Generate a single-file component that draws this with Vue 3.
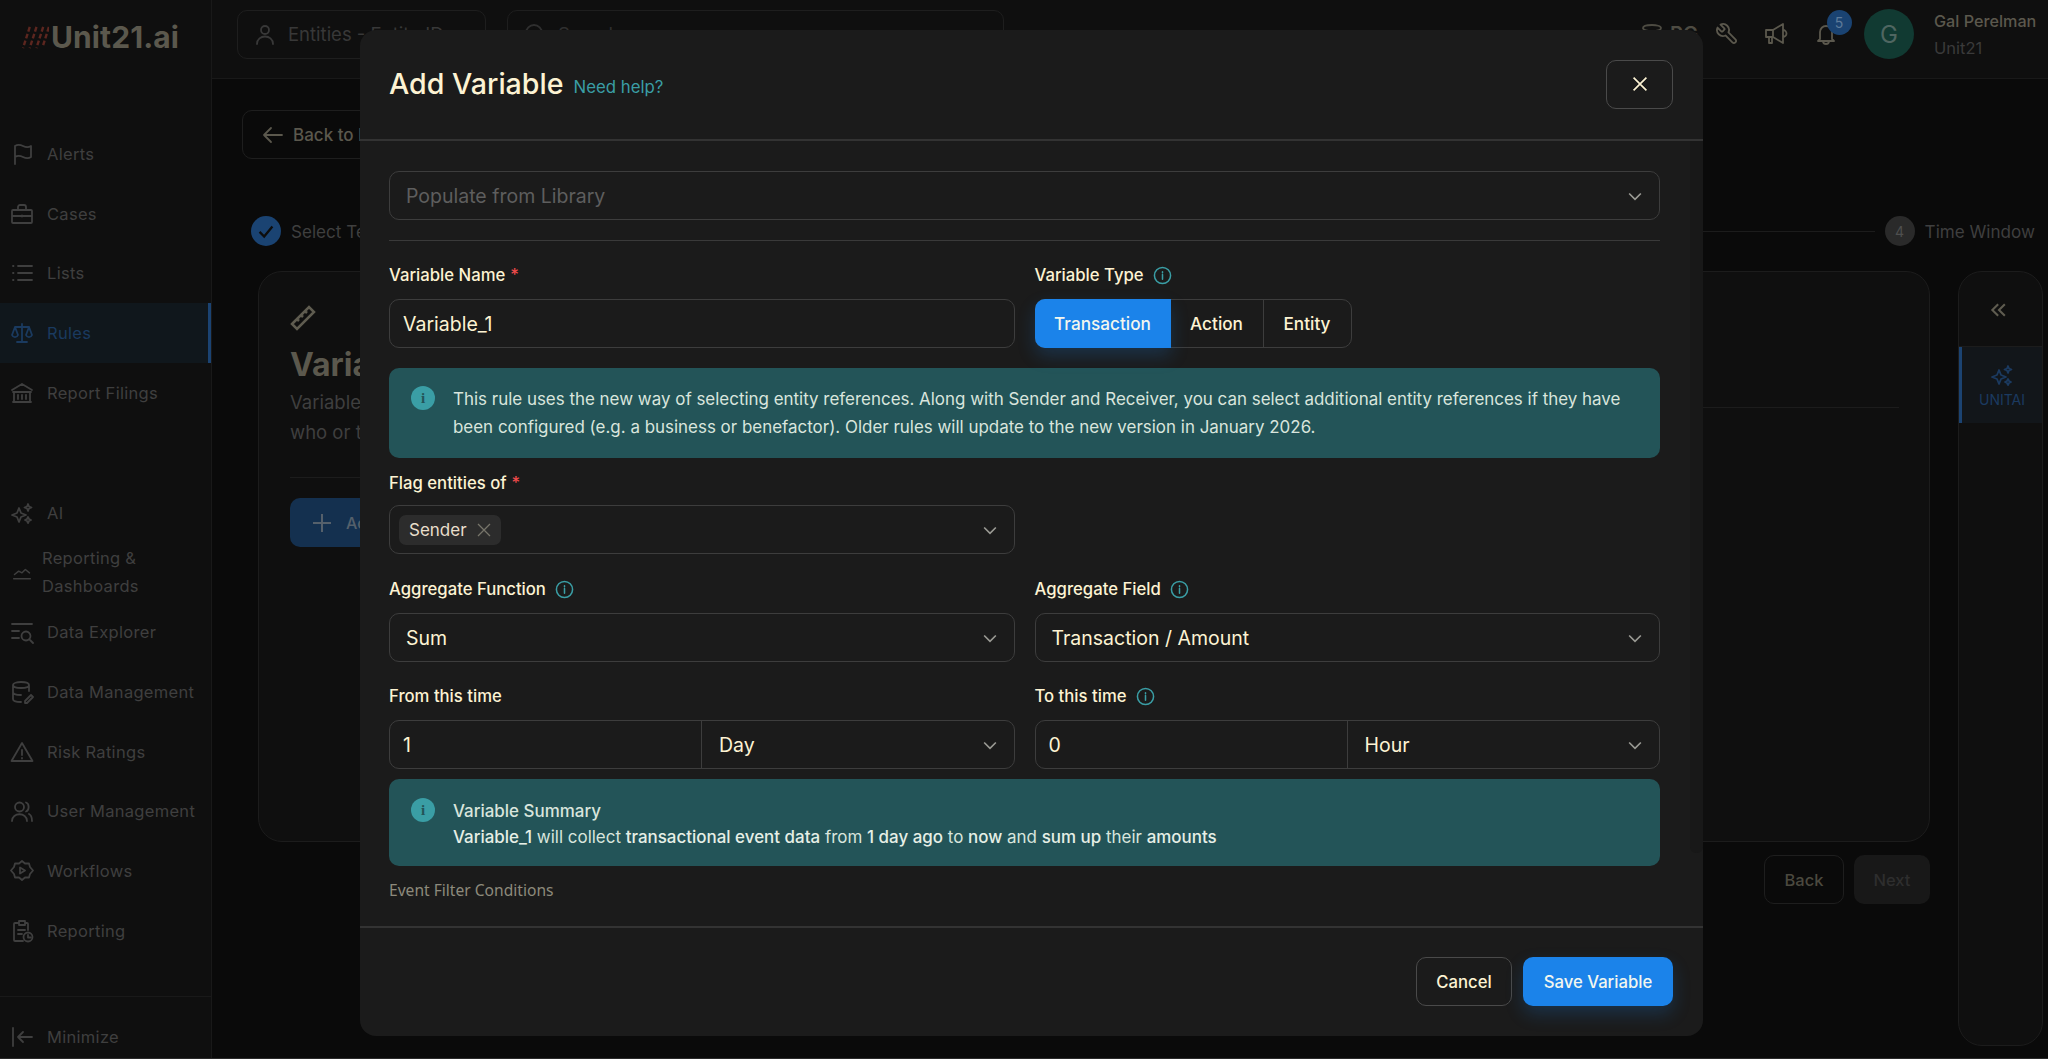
<script setup>
const navTop = [
  { t: 'Alerts', d: 'M5 22V4c3-2 6-1 8 0s5 2 8 0v11c-3 2-6 1-8 0s-5-2-8 0' },
  { t: 'Cases', d: 'M3 8h18a1 1 0 0 1 1 1v11a1 1 0 0 1-1 1H3a1 1 0 0 1-1-1V9a1 1 0 0 1 1-1zM8 8V5a2 2 0 0 1 2-2h4a2 2 0 0 1 2 2v3M2 14h20M12 13.5v1' },
  { t: 'Lists', d: 'M8 5h14M8 12h14M8 19h14M3 5h.5M3 12h.5M3 19h.5' },
  { t: 'Rules', d: 'M12 3v18M7 21h10M5 6h14M5 6l-3 8a3.2 3.2 0 0 0 6 0zM19 6l-3 8a3.2 3.2 0 0 0 6 0z', active: true },
  { t: 'Report Filings', d: 'M2 9l10-6 10 6M3 11h18M4 21V11M20 21V11M3 21h18M8 14v4M12 14v4M16 14v4' }
]
const sparkle = 'M9 7l2 5 5 2-5 2-2 5-2-5-5-2 5-2zM18 3l1 2.500 2.500 1-2.500 1-1 2.500-1-2.500-2.500-1 2.500-1zM18 16l1 2 2 1-2 1-1 2-1-2-2-1 2-1z'
const navBottom = [
  { t: 'AI', d: sparkle },
  { t: 'Reporting & Dashboards', d: 'M2 20h20M3 15l5-4 4 2 4-4 5 4', wide: true },
  { t: 'Data Explorer', d: 'M2 4h20M2 11h7M2 18h7M16 16m-4.500 0a4.500 4.500 0 1 0 9 0a4.500 4.500 0 1 0-9 0M20 20l3 3' },
  { t: 'Data Management', d: 'M3 5c0-4 16-4 16 0s-16 4-16 0zM3 5v14c0 2 4 3 8 3M19 5v6M3 12c0 2 4 3 8 3M15 21l6-6 2 2-6 6h-2z' },
  { t: 'Risk Ratings', d: 'M12 3L1.500 21h21zM12 10v5M12 18v.5' },
  { t: 'User Management', d: 'M9.500 8m-4.500 0a4.500 4.500 0 1 0 9 0a4.500 4.500 0 1 0-9 0M2 22c0-9 15-9 15 0M16 3.500c3.500 1 3.500 8 0 9M19 15c2 1 3 4 3 7' },
  { t: 'Workflows', d: 'M12 2l3 2.500h4l1 3.500 3 3.500-3 3.500-1 3.500h-4L12 21l-3-2.500H5l-1-3.500-3-3.500L4 8l1-3.500h4zM10 8.500v6l5-3z' },
  { t: 'Reporting', d: 'M9 4H5a1 1 0 0 0-1 1v16a1 1 0 0 0 1 1h8M15 4h2a1 1 0 0 1 1 1v6M9 2h6v4H9zM8 11h7M8 15h4M18 18m-4.500 0a4.500 4.500 0 1 0 9 0a4.500 4.500 0 1 0-9 0M18 16v2.500h2.500' }
]
const aggregate = [
  { label: 'Aggregate Function', value: 'Sum' },
  { label: 'Aggregate Field', value: 'Transaction / Amount' }
]
const times = [
  { label: 'From this time', info: false, num: '1', unit: 'Day' },
  { label: 'To this time', info: true, num: '0', unit: 'Hour' }
]
</script>

<template>
  <div class="app">
    <aside class="side">
      <div class="logo">
        <svg class="slashes" viewBox="0 0 28 24" width="27" height="23">
          <path d="M8 1L1 23M15 1L8 23M22 1L15 23M28 1L22 20" stroke="#5c261f" stroke-width="2.500" stroke-dasharray="5 2.500" fill="none" />
        </svg>
        <span>Unit21.ai</span>
      </div>
      <nav class="nav">
        <div v-for="n in navTop" :key="n.t" class="item" :class="{ active: n.active }">
          <svg class="ico" viewBox="0 0 24 24"><path :d="n.d" /></svg>
          <span>{{ n.t }}</span>
        </div>
      </nav>
      <nav class="nav second">
        <div v-for="n in navBottom" :key="n.t" class="item" :class="{ wide: n.wide }">
          <svg class="ico" viewBox="0 0 24 24"><path :d="n.d" /></svg>
          <span>{{ n.t }}</span>
        </div>
      </nav>
      <div class="minimize">
        <svg class="ico" viewBox="0 0 24 24"><path d="M3 3v18M22 12H8M13 7l-5 5 5 5" /></svg>
        <span>Minimize</span>
      </div>
    </aside>

    <main class="main">
      <header class="top">
        <div class="search one">
          <svg class="ico" viewBox="0 0 24 24"><path d="M12 8m-4 0a4 4 0 1 0 8 0a4 4 0 1 0-8 0M4 22c0-10 16-10 16 0" /></svg>
          <span>Entities - Entity ID</span>
        </div>
        <div class="search two">
          <svg class="ico" viewBox="0 0 24 24"><path d="M11 11m-8 0a8 8 0 1 0 16 0a8 8 0 1 0-16 0M17 17l5 5" /></svg>
          <span>Search</span>
        </div>
        <div class="tools">
          <svg class="ico first" viewBox="0 0 24 24"><path d="M3 6c0-4 18-4 18 0s-18 4-18 0z" /></svg>
          <span class="org">PG</span>
          <svg class="ico tool wrench" viewBox="0 0 24 24"><path d="M14.700 6.300a1 1 0 0 0 0 1.400l1.600 1.600a1 1 0 0 0 1.400 0l3.770-3.770a6 6 0 0 1-7.940 7.940l-6.910 6.910a2.120 2.120 0 0 1-3-3l6.910-6.910a6 6 0 0 1 7.940-7.940z" /></svg>
          <svg class="ico tool" viewBox="0 0 24 24"><path d="M2 8h7v7H2zM9 8l10-6v19l-10-6M19 8a3.500 3.500 0 0 1 0 7M5 15v6h3v-6" /></svg>
          <div class="bell">
            <svg class="ico" viewBox="0 0 24 24"><path d="M6 17V10a6 6 0 0 1 12 0v7l2 2H4zM9 19a3 3 0 0 0 6 0" /></svg>
            <span class="badge">5</span>
          </div>
          <div class="avatar">G</div>
          <div class="who">
            <div class="name">Gal Perelman</div>
            <div class="org2">Unit21</div>
          </div>
        </div>
      </header>

      <div class="content">
        <button class="back">
          <svg class="ico" viewBox="0 0 24 24"><path d="M21 12H3M10 5l-7 7 7 7" /></svg>
          <span>Back to List</span>
        </button>
        <div class="stepper">
          <span class="dot done">
            <svg viewBox="0 0 24 24" width="22" height="22"><path d="M5 13l5 5 9-11" fill="none" stroke="#0d0d0d" stroke-width="2.500" /></svg>
          </span>
          <span class="step-t">Select Template</span>
          <span class="line"></span>
          <span class="dot">4</span>
          <span class="step-t">Time Window</span>
        </div>
        <div class="body-row">
          <div class="col">
            <section class="card">
              <div class="card-left">
                <svg class="ruler" viewBox="0 0 26 26" width="26" height="26"><path d="M2 19L19 2l5 5L7 24zM7 14l2 2M11 10l2 2M15 6l2 2" fill="none" stroke="#5f5c50" stroke-width="2.500" /></svg>
                <h2>Variables</h2>
                <p>Variables let you define the values that a rule evaluates,<br />who or the what they are collected from</p>
                <div class="rule"></div>
                <button class="add">
                  <svg viewBox="0 0 24 24" width="24" height="24"><path d="M12 3v18M3 12h18" stroke="#55606b" stroke-width="2" fill="none" /></svg>
                  <span>Add Variable</span>
                </button>
              </div>
              <div class="card-right"><div class="rule"></div></div>
            </section>
            <div class="actions">
              <button class="ghost">Back</button>
              <button class="off">Next</button>
            </div>
          </div>
          <aside class="rail">
            <div class="chev">
              <svg viewBox="0 0 24 24" width="20" height="20"><path d="M11 5l-7 7 7 7M19 5l-7 7 7 7" fill="none" stroke="#5f5c50" stroke-width="2.500" /></svg>
            </div>
            <div class="tab">
              <svg class="ico" viewBox="0 0 24 24"><path :d="sparkle" /></svg>
              <span>UNITAI</span>
            </div>
          </aside>
        </div>
      </div>
    </main>

    <div class="bottom-line"></div>

    <div class="modal">
      <div class="m-head">
        <h1>Add Variable</h1>
        <a class="help">Need help?</a>
        <button class="close">
          <svg viewBox="0 0 24 24" width="22" height="22"><path d="M5 5l14 14M19 5L5 19" stroke="#fdf3d3" stroke-width="1.800" fill="none" /></svg>
        </button>
      </div>
      <div class="m-body">
        <div class="scroll"></div>
        <div class="box select">
          <span class="ph">Populate from Library</span>
          <svg class="caret" viewBox="0 0 24 24"><path d="M5 9l7 7 7-7" /></svg>
        </div>
        <div class="sep"></div>

        <div class="row">
          <div class="field">
            <label>Variable Name <b>*</b></label>
            <div class="box"><span class="val">Variable_1</span></div>
          </div>
          <div class="field">
            <label>Variable Type
              <svg class="info" viewBox="0 0 20 20"><circle cx="10" cy="10" r="8.500" /><path d="M10 9v5M10 6v1" /></svg>
            </label>
            <div class="seg">
              <span class="on">Transaction</span>
              <span class="s2">Action</span>
              <span class="s3">Entity</span>
            </div>
          </div>
        </div>

        <div class="note n1">
          <span class="circ">i</span>
          <div>This rule uses the new way of selecting entity references. Along with Sender and Receiver, you can select additional entity references if they have<br />been configured (e.g. a business or benefactor). Older rules will update to the new version in January 2026.</div>
        </div>

        <div class="row r2">
          <div class="field flag">
            <label>Flag entities of <b>*</b></label>
            <div class="box select chipbox">
              <span class="chip">Sender
                <svg viewBox="0 0 16 16" width="16" height="16"><path d="M2 2l12 12M14 2L2 14" stroke="#77756a" stroke-width="1.300" fill="none" /></svg>
              </span>
              <svg class="caret" viewBox="0 0 24 24"><path d="M5 9l7 7 7-7" /></svg>
            </div>
          </div>
        </div>

        <div class="row r3">
          <div v-for="a in aggregate" :key="a.label" class="field">
            <label>{{ a.label }}
              <svg class="info" viewBox="0 0 20 20"><circle cx="10" cy="10" r="8.500" /><path d="M10 9v5M10 6v1" /></svg>
            </label>
            <div class="box select">
              <span class="val pad">{{ a.value }}</span>
              <svg class="caret" viewBox="0 0 24 24"><path d="M5 9l7 7 7-7" /></svg>
            </div>
          </div>
        </div>

        <div class="row r4">
          <div v-for="t in times" :key="t.label" class="field">
            <label>{{ t.label }}
              <svg v-if="t.info" class="info" viewBox="0 0 20 20"><circle cx="10" cy="10" r="8.500" /><path d="M10 9v5M10 6v1" /></svg>
            </label>
            <div class="box split">
              <span class="val num">{{ t.num }}</span>
              <div class="unit">
                <span class="val">{{ t.unit }}</span>
                <svg class="caret" viewBox="0 0 24 24"><path d="M5 9l7 7 7-7" /></svg>
              </div>
            </div>
          </div>
        </div>

        <div class="note n2">
          <span class="circ">i</span>
          <div>
            <div class="sum-t">Variable Summary</div>
            <div><strong>Variable_1</strong> will collect <strong>transactional event data</strong> from <strong>1 day ago</strong> to <strong>now</strong> and <strong>sum up</strong> their <strong>amounts</strong></div>
          </div>
        </div>

        <div class="event">Event Filter Conditions</div>
      </div>
      <div class="m-foot">
        <button class="cancel">Cancel</button>
        <button class="save">Save Variable</button>
      </div>
    </div>
  </div>
</template>

<style>
html, body { margin: 0; background: #0a0a0a; overflow: hidden; }
</style>

<style scoped>
.app { width: 2048px; height: 1059px; display: flex; position: relative; overflow: hidden; background: #0a0a0a; font-family: Inter, "Noto Sans", sans-serif; color: #3f3f3f; }
.ico { width: 24px; height: 24px; fill: none; stroke: currentColor; stroke-width: 1.800; stroke-linecap: round; stroke-linejoin: round; flex: none; }

.side { width: 211px; height: 1059px; flex: none; display: flex; flex-direction: column; background: #0f0f0f; border-right: 1px solid #191919; box-sizing: content-box; }
.logo { height: 124px; box-sizing: border-box; padding: 22px 0 0 22px; display: flex; align-items: flex-start; gap: 2px; font-size: 30px; font-weight: 700; color: #5b584d; line-height: 30px; letter-spacing: .1px; }
.slashes { margin-top: 4px; }
.nav { display: flex; flex-direction: column; }
.second { margin-top: 60px; }
.item { height: 59.750px; display: flex; align-items: center; gap: 13px; padding-left: 10px; font-size: 16.500px; color: #3f3f3f; box-sizing: border-box; letter-spacing: .3px; }
.item.active { background: #10171c; color: #1a3a5f; border-right: 3px solid #1b4372; }
.item.wide { line-height: 28px; gap: 10px; padding-right: 30px; padding-left: 12px; }
.item.wide .ico { width: 20px; height: 20px; }
.minimize { margin-top: auto; height: 63px; box-sizing: border-box; border-top: 1px solid #191919; display: flex; align-items: center; gap: 13px; padding: 17px 0 0 10px; font-size: 16.500px; letter-spacing: .3px; }

.main { flex: 1; min-width: 0; display: flex; flex-direction: column; }
.top { height: 79px; box-sizing: border-box; border-bottom: 1px solid #191919; background: #0f0f0f; display: flex; align-items: center; padding: 0 0 10px 25px; }
.search { height: 49px; box-sizing: border-box; border: 1px solid #1e1e1e; border-radius: 10px; display: flex; align-items: center; gap: 11px; padding-left: 15px; font-size: 18.500px; color: #2f2f2f; white-space: nowrap; overflow: hidden; }
.one { width: 249px; margin-right: 21px; color: #383838; }
.two { width: 497px; }
.tools { flex: 1; display: flex; align-items: center; color: #5b584d; position: relative; }
.tool { width: 24px; height: 24px; }
.wrench { transform: scaleX(-1); }
.first { margin-left: 636px; color: #4d4b42; }
.org { margin-left: 6px; font-size: 20px; font-weight: 600; color: #4d4b42; width: 45px; }
.tool + .tool { margin-left: 25px; }
.bell { position: relative; margin-left: 26px; display: flex; }
.badge { position: absolute; left: 12.500px; top: -12.500px; width: 25px; height: 25px; border-radius: 50%; background: #1a4372; color: #5d7a99; font-size: 14px; display: flex; align-items: center; justify-content: center; }
.avatar { width: 50px; height: 50px; margin-left: 26px; border-radius: 50%; background: #113a32; color: #4f6661; font-size: 24px; display: flex; align-items: center; justify-content: center; }
.who { margin-left: 20px; white-space: nowrap; }
.name { font-size: 16.200px; font-weight: 500; color: #5b584d; line-height: 20px; margin-bottom: 7px; }
.org2 { font-size: 16.500px; color: #3a3a3a; line-height: 20px; }

.content { flex: 1; display: flex; flex-direction: column; padding: 31px 0 0 30px; }
.back { width: 230px; height: 49px; box-sizing: border-box; background: transparent; border: 1px solid #1e1e1e; border-radius: 10px; display: flex; align-items: center; gap: 8px; padding: 0 0 0 18px; font: 500 17px Inter, sans-serif; color: #5b584d; }
.stepper { margin: 57px 0 0 9px; display: flex; align-items: center; height: 30px; padding-right: 13px; font-size: 17.100px; }
.dot { width: 30px; height: 30px; border-radius: 50%; background: #2a2a2a; color: #4f4f4f; display: flex; align-items: center; justify-content: center; flex: none; font-size: 14px; }
.done { background: #1a4372; }
.step-t { margin-left: 10px; color: #3f3f3f; white-space: nowrap; }
.line { flex: 1; height: 1px; background: #1c1c1c; margin: 0 10px 0 20px; }
.body-row { margin: 25px 5px 0 16px; display: flex; gap: 28px; }
.col { flex: 1; }
.card { height: 571px; box-sizing: border-box; border: 1px solid #1c1c1c; border-radius: 24px; background: #0f0f0f; padding: 33px 30px 0 31px; display: flex; gap: 40px; }
.card-left { width: 700px; flex: none; }
.card-right { flex: 1; padding-top: 102px; }
.ruler { display: block; }
.card h2 { margin: 14px 0 0; font-size: 32px; font-weight: 700; color: #5b584d; line-height: 40px; }
.card p { margin: 2px 0 0; font-size: 18.500px; line-height: 30px; color: #3f3f3f; white-space: nowrap; }
.rule { height: 1px; background: #1c1c1c; margin-top: 30px; }
.card-right .rule { margin-top: 0; }
.add { margin-top: 20px; height: 49px; width: 200px; border: 0; border-radius: 10px; background: #14304f; display: flex; align-items: center; gap: 12px; padding: 0 0 0 20px; font: 500 16px Inter, sans-serif; color: #55606b; }
.actions { margin-top: 13px; display: flex; justify-content: flex-end; gap: 10px; }
.actions button { height: 49px; border-radius: 10px; font: 500 16.500px Inter, sans-serif; box-sizing: border-box; }
.ghost { width: 80px; background: transparent; border: 1px solid #1e1e1e; color: #4b493f; }
.off { width: 76px; background: #181818; border: 0; color: #2e2e2e; }
.rail { width: 85px; height: 775px; box-sizing: border-box; border: 1px solid #1c1c1c; border-radius: 24px; background: #0f0f0f; flex: none; }
.chev { height: 75px; border-bottom: 1px solid #1c1c1c; display: flex; align-items: center; justify-content: center; padding-right: 4px; padding-top: 2px; box-sizing: border-box; }
.tab { height: 76px; background: #12161a; border-left: 3px solid #1b4372; color: #1b3a60; display: flex; flex-direction: column; align-items: center; justify-content: center; gap: 4px; font-size: 14px; box-sizing: border-box; }
.bottom-line { position: absolute; left: 0; right: 0; bottom: 0; height: 1px; background: #2a2a2a; }

.modal { position: absolute; left: 360px; top: 30px; width: 1343px; height: 1006px; background: #1b1b1b; border-radius: 16px; display: flex; flex-direction: column; color: #fdf3d3; overflow: hidden; }
.m-head { height: 111px; flex: none; box-sizing: border-box; border-bottom: 2px solid #333; display: flex; align-items: center; padding: 0 30px 1px 29px; }
.m-head h1 { margin: 0; font-size: 28.600px; font-weight: 500; line-height: 40px; color: #fdf3d3; }
.help { margin-left: 10px; font-size: 16.800px; color: #3a9ea5; padding-top: 5px; }
.close { margin-left: auto; width: 67px; height: 49px; background: transparent; border: 1px solid #4a4a4a; border-radius: 10px; display: flex; align-items: center; justify-content: center; padding: 0; }
.m-body { flex: 1; min-height: 0; position: relative; padding: 30px 43px 0 29px; }
.scroll { position: absolute; right: 0; top: 0; width: 13px; height: 712px; background: #181818; border-radius: 0 0 6px 6px; }
.box { height: 49px; box-sizing: border-box; border: 1px solid #3d3d3d; border-radius: 10px; display: flex; align-items: center; padding-left: 13px; font-size: 19.500px; }
.select { padding-right: 14px; justify-content: space-between; }
.ph { font-size: 19.500px; color: #5e5e5e; margin-left: 3px; }
.caret { width: 20px; height: 20px; fill: none; stroke: #9a9a94; stroke-width: 2; flex: none; }
.val { color: #fdf3d3; }
.pad { margin-left: 3px; }
.sep { height: 1px; background: #3a3a3a; margin: 20px 0 23px; }
.row { display: grid; grid-template-columns: 1fr 1fr; column-gap: 20px; }
.field { display: flex; flex-direction: column; gap: 15px; min-width: 0; }
label { height: 20px; box-sizing: border-box; padding-top: 2px; display: flex; align-items: center; gap: 5px; font-size: 16.700px; font-weight: 500; color: #fdf3d3; white-space: nowrap; }
label b { color: #f04b4b; font-weight: 500; }
.info { width: 19px; height: 19px; margin-left: 4px; fill: none; stroke: #3a9ea5; stroke-width: 1.600; stroke-linecap: round; }
.seg { height: 49px; width: 317px; box-sizing: border-box; border: 1px solid #3d3d3d; border-radius: 10px; display: flex; font-size: 17.200px; font-weight: 500; }
.seg span { display: flex; align-items: center; justify-content: center; box-sizing: border-box; }
.on { width: 136px; margin: -1px 0 -1px -1px; background: #1b83ea; border-radius: 10px 0 0 10px; color: #f2f6ef; box-shadow: 0 8px 18px rgba(27,131,234,.22); }
.s2 { width: 93px; border-right: 1px solid #3d3d3d; }
.s3 { flex: 1; }
.note { background: #235458; border-radius: 10px; color: #d9e5dd; font-size: 16.950px; display: flex; box-sizing: border-box; padding-left: 22px; gap: 18px; white-space: nowrap; }
.n1 { height: 90px; margin-top: 20px; padding-top: 18px; line-height: 27.500px; }
.n2 { height: 87px; margin-top: 10px; padding-top: 19px; line-height: 26px; }
.circ { width: 24px; height: 24px; flex: none; border-radius: 50%; background: #3a9ea5; color: #235458; font: 700 15px/24px "Liberation Serif", serif; text-align: center; margin-top: 0; }
.n2 strong { font-weight: 500; color: #e6efe6; }
.sum-t { font-weight: 500; }
.r2 { margin-top: 14px; }
.flag { gap: 13px; }
.flag .box { padding-left: 9px; }
.chip { height: 30px; width: 102px; box-sizing: border-box; background: #2c2c2c; border-radius: 7px; display: flex; align-items: center; justify-content: space-between; padding: 0 9px 0 10px; font-size: 17px; color: #e8decb; }
.r3 { margin-top: 24px; }
.r4 { margin-top: 23px; }
.split { padding-left: 0; }
.num { width: 312px; height: 100%; box-sizing: border-box; padding-left: 13px; display: flex; align-items: center; border-right: 1px solid #3d3d3d; flex: none; }
.unit { flex: 1; display: flex; align-items: center; justify-content: space-between; padding: 0 14px 0 17px; }
.event { margin-top: 14px; height: 20px; font: 15.600px/20px "Noto Sans", sans-serif; color: #8d8a7c; }
.m-foot { height: 110px; flex: none; box-sizing: border-box; border-top: 2px solid #333; display: flex; justify-content: flex-end; gap: 11px; padding: 29px 30px 0 0; }
.m-foot button { height: 49px; border-radius: 10px; font: 500 16.700px Inter, sans-serif; box-sizing: border-box; }
.cancel { width: 96px; background: transparent; border: 1px solid #4a4a4a; color: #fdf3d3; }
.save { width: 150px; border: 0; background: #1b83ea; color: #f2f6ef; box-shadow: 0 8px 18px rgba(27,131,234,.22); }
</style>
